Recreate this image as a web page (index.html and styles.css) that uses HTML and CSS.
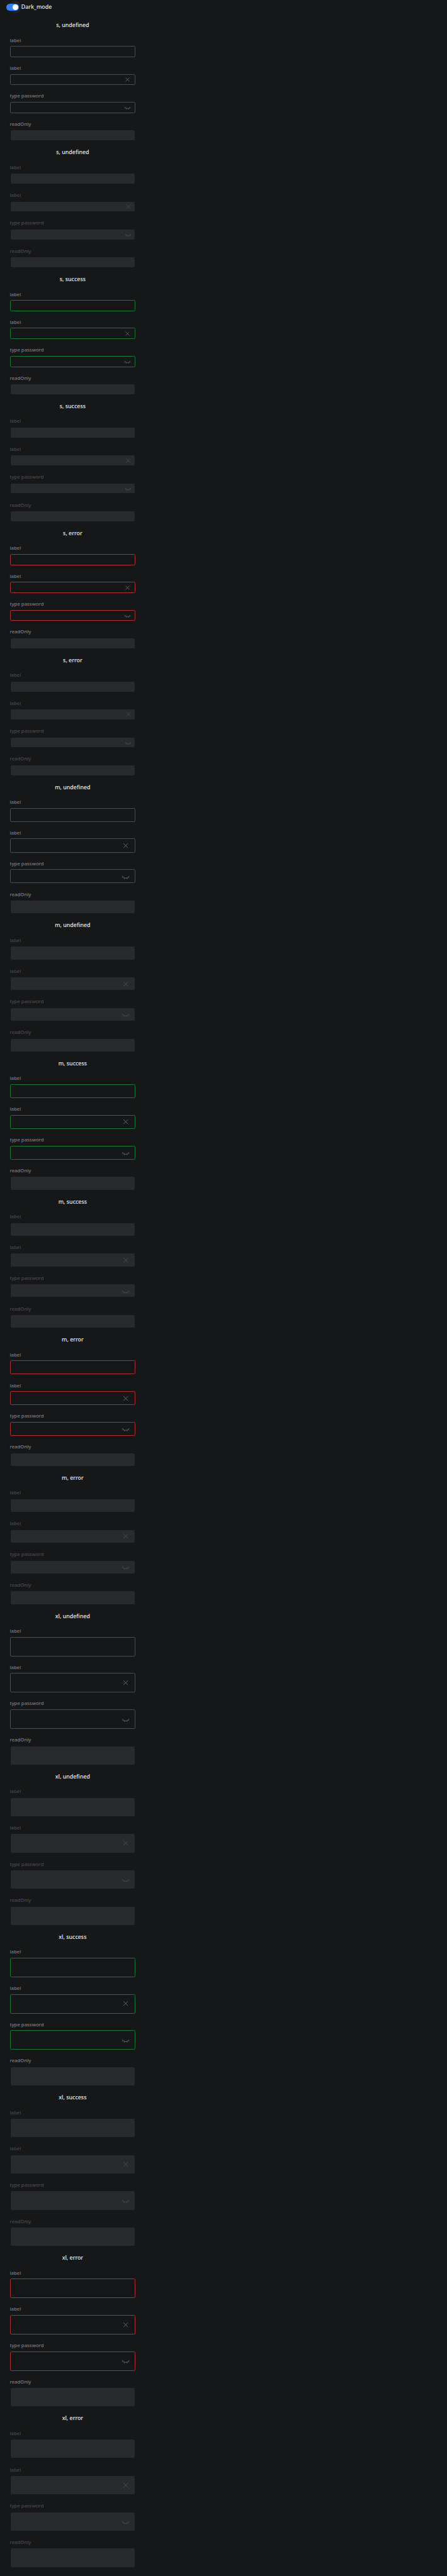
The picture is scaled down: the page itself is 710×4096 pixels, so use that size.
FILE: index.html
```html
<!DOCTYPE html>
<html lang="en">
<head>
<meta charset="utf-8">
<title>Input</title>
<link rel="stylesheet" href="styles.css">
</head>
<body>
<svg class="sprite" aria-hidden="true">
  <symbol id="close" viewBox="0 0 24 24"><path d="M5.500 5.500l13 13M18.500 5.500l-13 13"/></symbol>
  <symbol id="eye" viewBox="0 0 24 24"><path d="M2.200 10.600C4.500 14.600 8 16.800 12 16.800s7.500-2.200 9.800-6.200M5 13.800l-2.800 2M8.500 16.200l-1.200 3.100M15.500 16.200l1.200 3.100M19 13.800l2.800 2"/></symbol>
</svg>
<header class="topbar">
  <span class="switch"><span class="halo"></span><span class="knob"></span></span>
  <span class="title">Dark_mode</span>
</header>
<main id="list" class="list"></main>
<script src="app.js"></script>
</body>
</html>
```
FILE: styles.css
```css
:root {
  --u: 0.5546875px;
  --bg: #161719;
}
* { box-sizing: border-box; }
body {
  margin: 0;
  height: calc(7380 * var(--u));
  background: var(--bg);
  color: #ededef;
  font-family: "Noto Sans", sans-serif;
  overflow: hidden;
}
.sprite { position: absolute; width: 0; height: 0; }
.topbar {
  display: flex;
  align-items: center;
  gap: calc(7 * var(--u));
  height: calc(50 * var(--u));
  padding: 0 0 calc(10 * var(--u)) calc(18 * var(--u));
}
.title {
  height: calc(24 * var(--u));
  font-size: calc(16 * var(--u));
  line-height: calc(26 * var(--u));
  font-weight: 500;
}
.switch {
  position: relative;
  flex: none;
  width: calc(36 * var(--u));
  height: calc(20 * var(--u));
  border-radius: calc(10 * var(--u));
  background: #3180ff;
}
.halo, .knob { position: absolute; border-radius: 50%; }
.halo {
  left: calc(8 * var(--u));
  top: calc(-8 * var(--u));
  width: calc(36 * var(--u));
  height: calc(36 * var(--u));
  background: rgba(255, 255, 255, 0.05);
  z-index: -1;
}
.knob {
  right: calc(2 * var(--u));
  top: calc(2 * var(--u));
  width: calc(16 * var(--u));
  height: calc(16 * var(--u));
  background: #fff;
}
.list { width: calc(416 * var(--u)); }
.group {
  display: flex;
  flex-direction: column;
  padding: calc(10 * var(--u)) calc(28 * var(--u));
}
.group .title { text-align: center; }
.field {
  display: flex;
  flex-direction: column;
  padding-top: calc(20 * var(--u));
  color: #7c7e87;
}
.label {
  height: calc(28 * var(--u));
  font-size: calc(14 * var(--u));
  line-height: calc(23 * var(--u));
  font-weight: 500;
}
.box {
  display: flex;
  align-items: center;
  justify-content: flex-end;
  height: calc(32 * var(--u));
  padding-right: calc(12 * var(--u) - 1px);
  border: 1px solid #4d4e55;
  border-radius: calc(4 * var(--u));
}
.icon {
  width: calc(20 * var(--u));
  height: calc(20 * var(--u));
  fill: none;
  stroke: currentColor;
  stroke-width: 1.4;
}
.m .box { height: calc(40 * var(--u)); }
.xl .box { height: calc(56 * var(--u)); }
.m .box, .xl .box { padding-right: calc(16 * var(--u) - 1px); }
.m .icon, .xl .icon { width: calc(24 * var(--u)); height: calc(24 * var(--u)); }
.success .box { border-color: #147a35; }
.error .box { border-color: #b03036; }
.disabled .field { color: #4a4b52; }
.filled .icon { color: #54555c; }
.group .filled .box {
  padding-right: calc(10 * var(--u));
  border: calc(2 * var(--u)) solid transparent;
  border-radius: calc(6 * var(--u));
  background: #292a2d padding-box;
}
.m .filled .box, .xl .filled .box { padding-right: calc(14 * var(--u)); }
```
FILE: app.js
```js
const list = document.getElementById("list");
const fields = [["label"], ["label", "close"], ["type password", "eye"], ["readOnly"]];

for (const size of ["s", "m", "xl"]) {
  for (const status of ["undefined", "success", "error"]) {
    for (const disabled of [false, true]) {
      const group = document.createElement("section");
      group.className = `group ${size} ${status}${disabled ? " disabled" : ""}`;
      group.innerHTML = `<div class="title">${size}, ${status}</div>` + fields.map(([label, icon]) => `
        <div class="field${disabled || label === "readOnly" ? " filled" : ""}">
          <div class="label">${label}</div>
          <div class="box">${icon ? `<svg class="icon"><use href="#${icon}"/></svg>` : ""}</div>
        </div>`).join("");
      list.append(group);
    }
  }
}
```
